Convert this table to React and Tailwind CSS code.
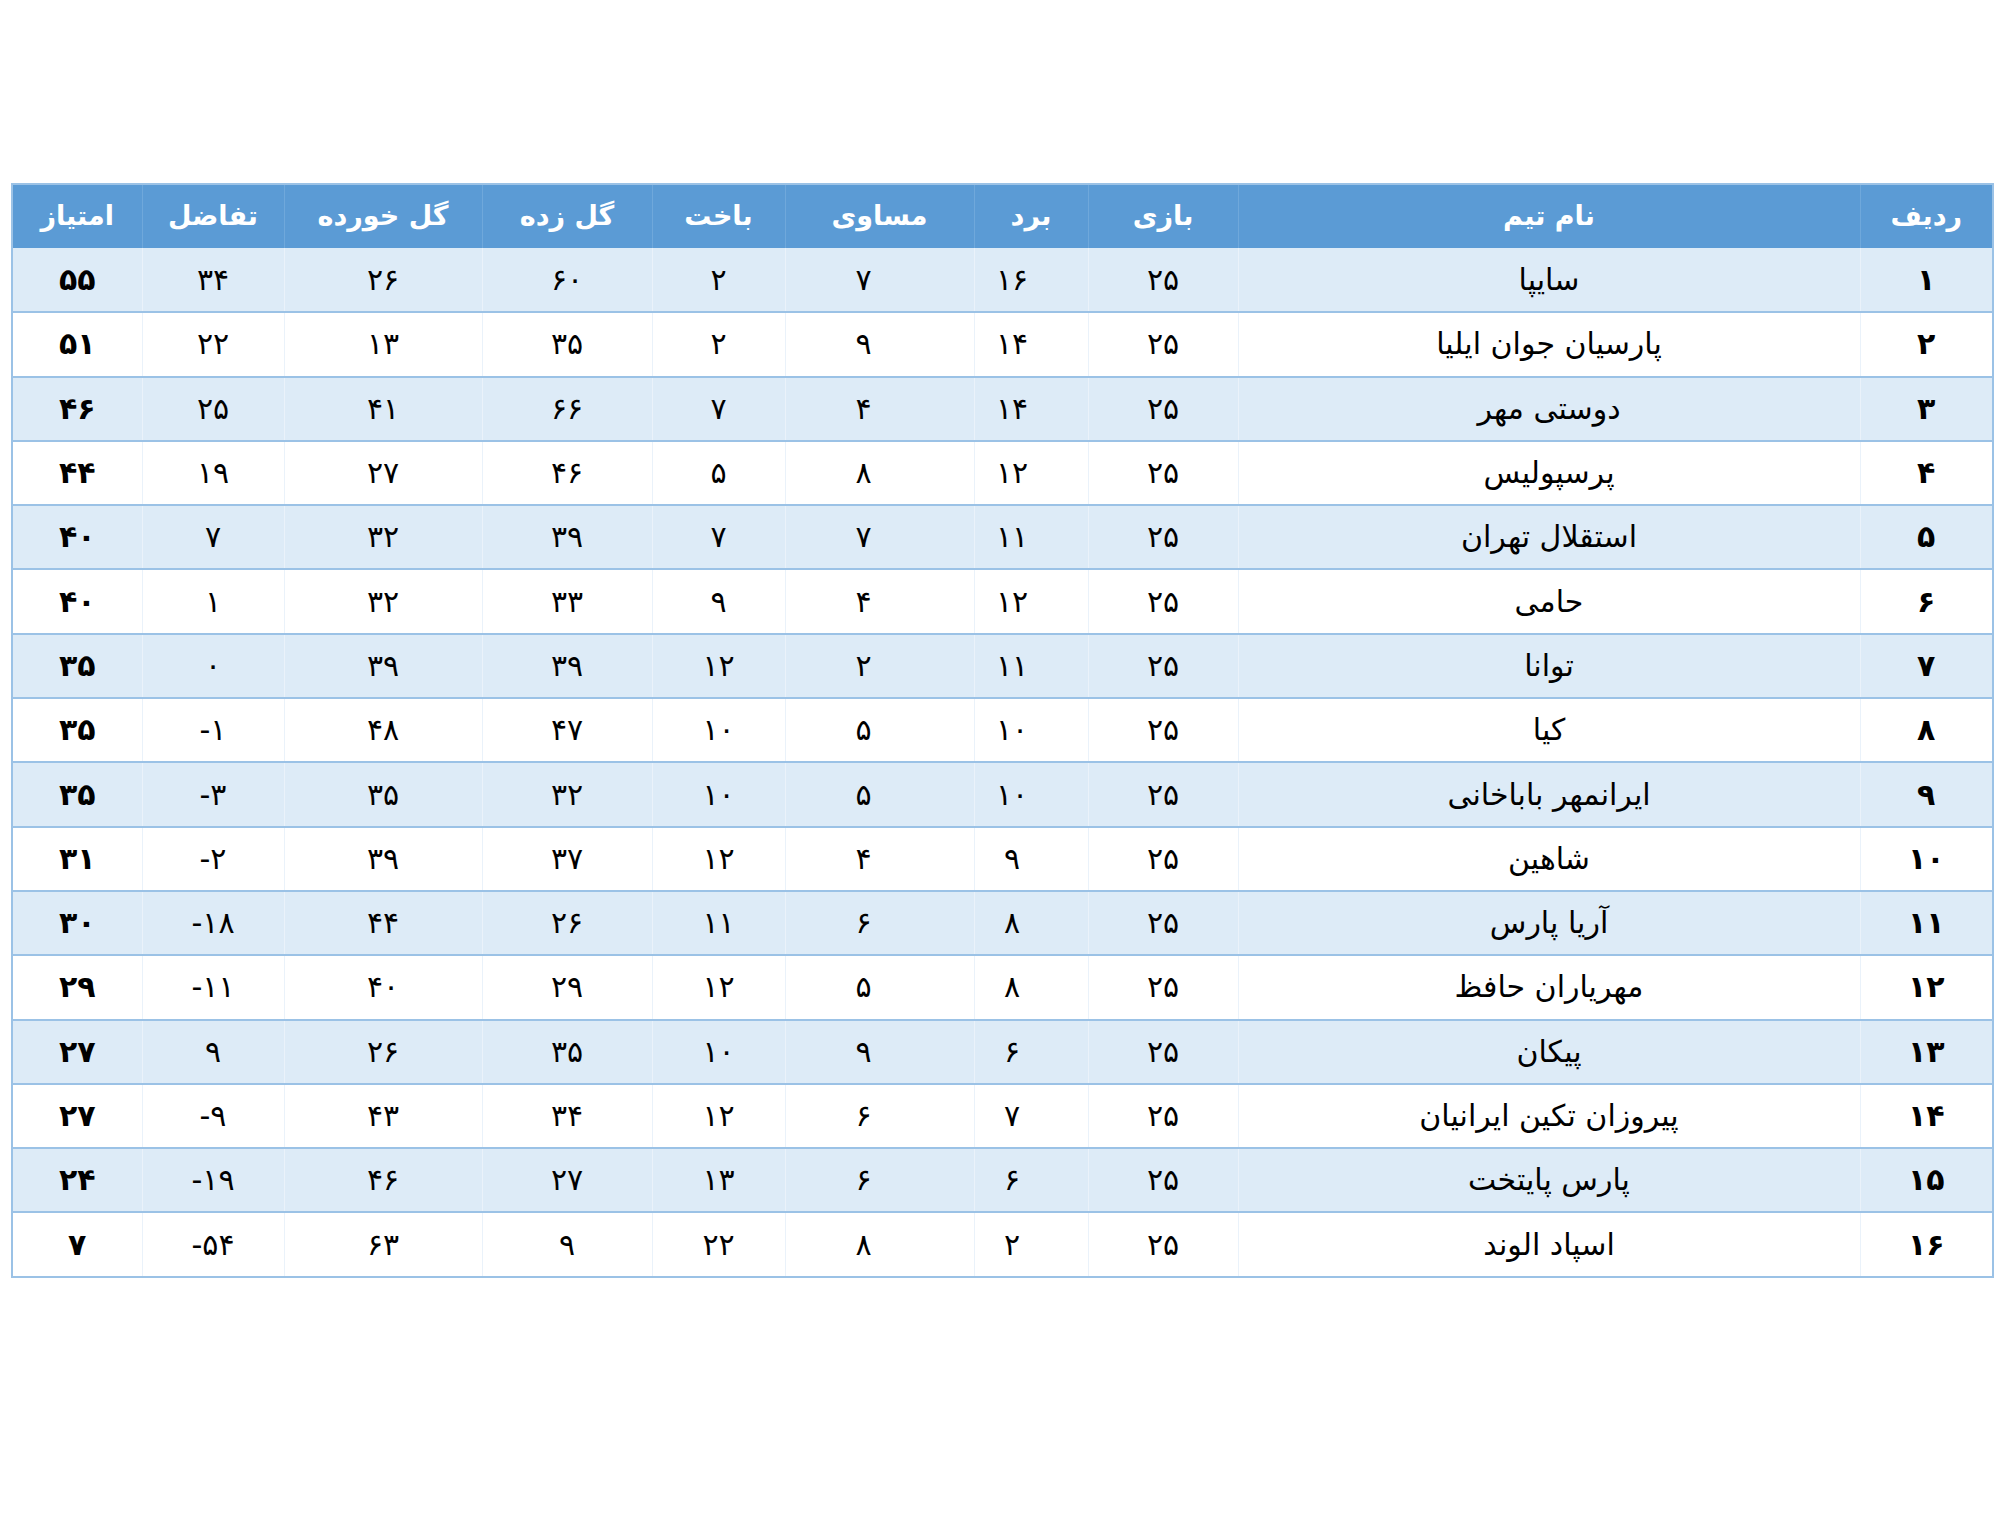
const rows = [
  ["۱", "سایپا", "۲۵", "۱۶", "۷", "۲", "۶۰", "۲۶", "۳۴", "۵۵"],
  ["۲", "پارسیان جوان ایلیا", "۲۵", "۱۴", "۹", "۲", "۳۵", "۱۳", "۲۲", "۵۱"],
  ["۳", "دوستی مهر", "۲۵", "۱۴", "۴", "۷", "۶۶", "۴۱", "۲۵", "۴۶"],
  ["۴", "پرسپولیس", "۲۵", "۱۲", "۸", "۵", "۴۶", "۲۷", "۱۹", "۴۴"],
  ["۵", "استقلال تهران", "۲۵", "۱۱", "۷", "۷", "۳۹", "۳۲", "۷", "۴۰"],
  ["۶", "حامی", "۲۵", "۱۲", "۴", "۹", "۳۳", "۳۲", "۱", "۴۰"],
  ["۷", "توانا", "۲۵", "۱۱", "۲", "۱۲", "۳۹", "۳۹", "۰", "۳۵"],
  ["۸", "کیا", "۲۵", "۱۰", "۵", "۱۰", "۴۷", "۴۸", "-۱", "۳۵"],
  ["۹", "ایرانمهر باباخانی", "۲۵", "۱۰", "۵", "۱۰", "۳۲", "۳۵", "-۳", "۳۵"],
  ["۱۰", "شاهین", "۲۵", "۹", "۴", "۱۲", "۳۷", "۳۹", "-۲", "۳۱"],
  ["۱۱", "آریا پارس", "۲۵", "۸", "۶", "۱۱", "۲۶", "۴۴", "-۱۸", "۳۰"],
  ["۱۲", "مهریاران حافظ", "۲۵", "۸", "۵", "۱۲", "۲۹", "۴۰", "-۱۱", "۲۹"],
  ["۱۳", "پیکان", "۲۵", "۶", "۹", "۱۰", "۳۵", "۲۶", "۹", "۲۷"],
  ["۱۴", "پیروزان تکین ایرانیان", "۲۵", "۷", "۶", "۱۲", "۳۴", "۴۳", "-۹", "۲۷"],
  ["۱۵", "پارس پایتخت", "۲۵", "۶", "۶", "۱۳", "۲۷", "۴۶", "-۱۹", "۲۴"],
  ["۱۶", "اسپاد الوند", "۲۵", "۲", "۸", "۲۲", "۹", "۶۳", "-۵۴", "۷"],
];

const headers = ["ردیف", "نام تیم", "بازی", "برد", "مساوی", "باخت", "گل زده", "گل خورده", "تفاضل", "امتیاز"];
const widths = ["w-[133px]", "w-[622px]", "w-[150px]", "w-[114px]", "w-[189px]", "w-[133px]", "w-[170px]", "w-[198px]", "w-[142px]", "w-[130px]"];
// body cells of برد and مساوی sit a bit left of the header centre
const cellPad = ["", "", "", "pr-[38px]", "pr-[32px]", "", "", "", "", ""];

// keep minus sign on the left of the number like the sheet does
function Num({ v }) {
  if (v.startsWith("-")) {
    return <span dir="ltr">{v}</span>;
  }
  return v;
}

export default function App() {
  return (
    <div className="min-h-screen bg-white pt-[183px] pl-[11px] font-['DejaVu_Sans',sans-serif]">
      <table dir="rtl" className="w-[1982px] table-fixed border-collapse border-2 border-[#9bc2e6]">
        <colgroup>
          {widths.map((w, i) => (
            <col key={i} className={w} />
          ))}
        </colgroup>
        <thead>
          <tr className="h-[64px] bg-[#5b9bd5] text-white">
            {headers.map((h, i) => (
              <th key={i} className="border-l border-[#6fa8db] text-[27px] font-bold text-center align-middle last:border-l-0">
                {h}
              </th>
            ))}
          </tr>
        </thead>
        <tbody>
          {rows.map((r, ri) => (
            <tr
              key={ri}
              className={`h-[64.3px] border-b-2 border-[#9bc2e6] text-black ${ri % 2 === 0 ? "bg-[#ddebf7]" : "bg-white"}`}
            >
              {r.map((c, ci) => (
                <td
                  key={ci}
                  className={`border-l border-[#eaf2fa] text-center align-middle text-[30px] leading-none ${cellPad[ci]} ${
                    ci === 0 || ci === 9 ? "font-bold" : "font-normal"
                  }`}
                >
                  <Num v={c} />
                </td>
              ))}
            </tr>
          ))}
        </tbody>
      </table>
    </div>
  );
}
